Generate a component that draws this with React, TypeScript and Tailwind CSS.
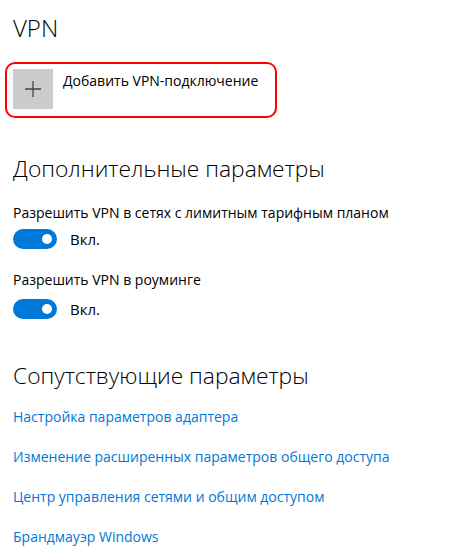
import React from "react";

function Toggle() {
  return (
    <div className="flex items-center gap-[13px]">
      <div className="w-[44px] h-[20px] rounded-full bg-[#0078d7] flex items-center justify-end pr-[5px]">
        <div className="w-[10px] h-[10px] rounded-full bg-white" />
      </div>
      <span className="text-[15px] text-black leading-[20px]">Вкл.</span>
    </div>
  );
}

export default function App() {
  return (
    <div
      className="w-[467px] h-[558px] bg-white pl-[13px] pt-[12px] overflow-hidden"
      style={{ fontFamily: '"Open Sans", "Noto Sans", sans-serif' }}
    >
      <h1 className="text-[24px] font-light leading-[32px] text-black">VPN</h1>
      <div className="mt-[18px] -ml-[8px] w-[272px] h-[56px] border-2 border-[#ff0000] rounded-[10px] flex items-start pl-[6px] pt-[5px]">
        <div className="w-[40px] h-[40px] bg-[#cccccc] flex items-center justify-center">
          <svg width="16" height="16" viewBox="0 0 16 16">
            <path d="M8 0v16M0 8h16" stroke="#444" strokeWidth="1.3" />
          </svg>
        </div>
        <span className="ml-[10px] mt-[2px] text-[14px] leading-[20px] text-black">Добавить VPN-подключение</span>
      </div>
      <h2 className="mt-[35px] text-[22.8px] font-light leading-[32px] text-black">Дополнительные параметры</h2>
      <div className="mt-[18px] text-[14px] leading-[20px] text-black">Разрешить VPN в сетях с лимитным тарифным планом</div>
      <div className="mt-[6px]"><Toggle /></div>
      <div className="mt-[21px] text-[14px] leading-[20px] text-black">Разрешить VPN в роуминге</div>
      <div className="mt-[9px]"><Toggle /></div>
      <h2 className="mt-[41px] text-[22.8px] font-light leading-[32px] text-black">Сопутствующие параметры</h2>
      <div className="mt-[15px] flex flex-col gap-[20px] text-[14px] leading-[20px] text-[#0078d7]">
        <a>Настройка параметров адаптера</a>
        <a>Изменение расширенных параметров общего доступа</a>
        <a>Центр управления сетями и общим доступом</a>
        <a>Брандмауэр Windows</a>
      </div>
    </div>
  );
}
